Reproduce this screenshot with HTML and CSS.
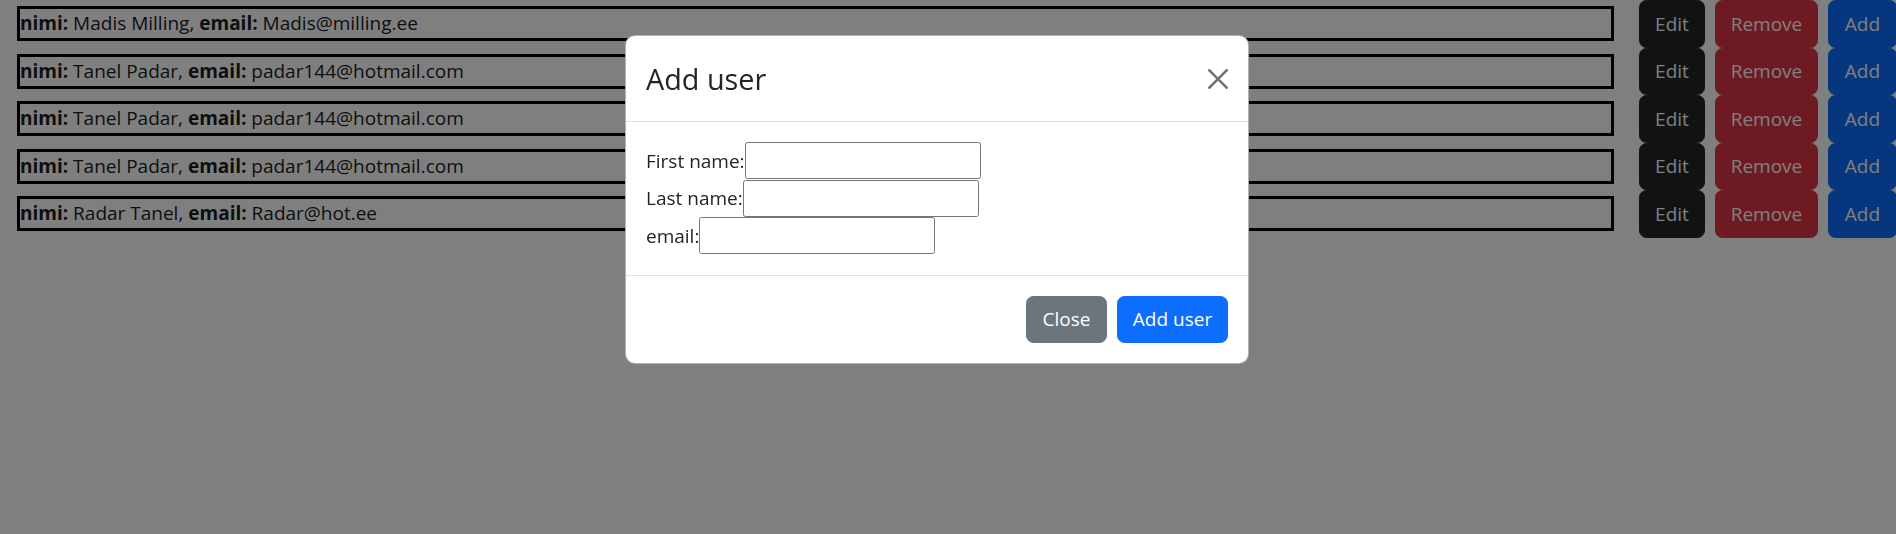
FILE: index.html
```html
<!DOCTYPE html>
<html lang="et">
<head>
<meta charset="utf-8">
<title>Users</title>
<link rel="stylesheet" href="styles.css">
</head>
<body>
<main class="user-list">
  <div class="user-row">
    <div class="user-info"><b>nimi:</b> Madis Milling, <b>email:</b> Madis@milling.ee</div>
    <button class="btn btn-dark btn-edit">Edit</button>
    <button class="btn btn-danger btn-remove">Remove</button>
    <button class="btn btn-primary btn-add">Add</button>
  </div>
  <div class="user-row">
    <div class="user-info"><b>nimi:</b> Tanel Padar, <b>email:</b> padar144@hotmail.com</div>
    <button class="btn btn-dark btn-edit">Edit</button>
    <button class="btn btn-danger btn-remove">Remove</button>
    <button class="btn btn-primary btn-add">Add</button>
  </div>
  <div class="user-row">
    <div class="user-info"><b>nimi:</b> Tanel Padar, <b>email:</b> padar144@hotmail.com</div>
    <button class="btn btn-dark btn-edit">Edit</button>
    <button class="btn btn-danger btn-remove">Remove</button>
    <button class="btn btn-primary btn-add">Add</button>
  </div>
  <div class="user-row">
    <div class="user-info"><b>nimi:</b> Tanel Padar, <b>email:</b> padar144@hotmail.com</div>
    <button class="btn btn-dark btn-edit">Edit</button>
    <button class="btn btn-danger btn-remove">Remove</button>
    <button class="btn btn-primary btn-add">Add</button>
  </div>
  <div class="user-row">
    <div class="user-info"><b>nimi:</b> Radar Tanel, <b>email:</b> Radar@hot.ee</div>
    <button class="btn btn-dark btn-edit">Edit</button>
    <button class="btn btn-danger btn-remove">Remove</button>
    <button class="btn btn-primary btn-add">Add</button>
  </div>
</main>

<div class="modal-backdrop"></div>

<div class="modal" role="dialog">
  <div class="modal-header">
    <h4 class="modal-title">Add user</h4>
    <button class="btn-x" aria-label="Close">
      <svg viewBox="0 0 16 16" width="20" height="20"><path d="M.293.293a1 1 0 0 1 1.414 0L8 6.586 14.293.293a1 1 0 1 1 1.414 1.414L9.414 8l6.293 6.293a1 1 0 0 1-1.414 1.414L8 9.414l-6.293 6.293a1 1 0 0 1-1.414-1.414L6.586 8 .293 1.707a1 1 0 0 1 0-1.414z"/></svg>
    </button>
  </div>
  <div class="modal-body">
    <div class="field"><label>First name:</label><input type="text"></div>
    <div class="field"><label>Last name:</label><input type="text"></div>
    <div class="field"><label>email:</label><input type="text"></div>
  </div>
  <div class="modal-footer">
    <button class="btn btn-secondary btn-close-modal">Close</button>
    <button class="btn btn-primary btn-submit">Add user</button>
  </div>
</div>
</body>
</html>
```

FILE: styles.css
```css
html, body {
  margin: 0;
  padding: 0;
  background: #fff;
  overflow: hidden;
  width: 1896px;
  height: 534px;
}

body {
  font-family: "Open Sans", "Noto Sans", sans-serif;
  font-size: 19px;
  color: #1a1d20;
}

.user-list {
  display: flex;
  flex-direction: column;
}

.user-row {
  display: flex;
  align-items: center;
  height: 47.5px;
  padding-left: 17px;
}

.user-info {
  flex: 0 0 1597px;
  box-sizing: border-box;
  height: 35px;
  border: 3px solid #000;
  line-height: 29px;
  margin-right: 25px;
  white-space: nowrap;
  overflow: hidden;
}

.user-info b {
  font-weight: 700;
}

.btn {
  flex-shrink: 0;
  box-sizing: border-box;
  height: 47.5px;
  border: 1px solid transparent;
  border-radius: 7.5px;
  padding: 0;
  font-family: inherit;
  font-size: 19px;
  line-height: 30px;
  color: #fff;
  text-align: center;
  white-space: nowrap;
  cursor: pointer;
}

.btn-dark { background: #212529; border-color: #212529; }
.btn-danger { background: #dc3545; border-color: #dc3545; }
.btn-primary { background: #0d6efd; border-color: #0d6efd; }
.btn-secondary { background: #6c757d; border-color: #6c757d; }

.btn-edit { width: 66px; margin-right: 10px; }
.btn-remove { width: 103px; margin-right: 10px; }
.btn-add { width: 69px; }

.modal-backdrop {
  position: fixed;
  inset: 0;
  background: rgba(0, 0, 0, 0.5);
}

.modal {
  position: absolute;
  left: 625px;
  top: 35px;
  width: 624px;
  box-sizing: border-box;
  background: #fff;
  border: 1px solid rgba(0, 0, 0, 0.3);
  border-radius: 10px;
  display: flex;
  flex-direction: column;
}

.modal-header {
  display: flex;
  align-items: center;
  justify-content: space-between;
  padding: 20px;
  border-bottom: 1px solid #dee2e6;
}

.modal-title {
  margin: 0;
  font-size: 28.8px;
  font-weight: 400;
  line-height: 45px;
  color: #212529;
}

.btn-x {
  display: flex;
  align-items: center;
  justify-content: center;
  width: 20px;
  height: 20px;
  padding: 0;
  border: 0;
  background: transparent;
  opacity: 0.55;
}

.btn-x svg {
  display: block;
  fill: #000;
}

.modal-body {
  padding: 20px;
  color: #212529;
}

.field {
  display: flex;
  align-items: center;
  height: 37.5px;
  line-height: 30px;
}

.field input {
  box-sizing: border-box;
  width: 236px;
  height: 37px;
  margin: 0;
  padding: 2px 3px;
  border: 1px solid #767676;
  border-radius: 2.5px;
  font-size: 16px;
}

.modal-footer {
  display: flex;
  justify-content: flex-end;
  align-items: center;
  padding: 15px;
  border-top: 1px solid #dee2e6;
}

.modal-footer .btn {
  margin: 5px;
}

.btn-close-modal { width: 81px; }
.btn-submit { width: 111px; }
```
